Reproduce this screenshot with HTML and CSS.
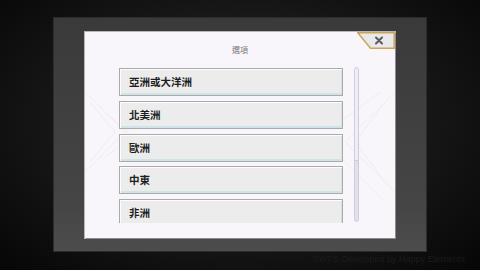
FILE: index.html
```html
<!DOCTYPE html>
<html lang="zh-Hant">
<head>
    <meta charset="UTF-8">
    <meta name="viewport" content="width=device-width, initial-scale=1.0">
    <title>選項</title>
    <link rel="stylesheet" href="styles.css">
</head>
<body>
    <div class="frame">
        <div class="panel">
            <svg class="deco" width="310" height="206" viewBox="0 0 310 206">
                <g stroke="#eeebf1" stroke-width="1" fill="none">
                    <path d="M0 60 L40 100 L0 140"/>
                    <path d="M5 70 L30 100 L5 130"/>
                    <path d="M20 80 L48 105 L20 125"/>
                    <path d="M310 60 L260 110 L310 160"/>
                    <path d="M300 70 L270 110 L300 150"/>
                    <path d="M250 120 L300 170"/>
                    <path d="M255 90 L295 60"/>
                </g>
            </svg>
            <div class="close-tab">
                <svg width="38" height="17" viewBox="0 0 38 17">
                    <polygon points="0.8,0.8 37.2,0.8 37.2,16.2 13.5,16.2" fill="#e9e8ec" stroke="#c9a653" stroke-width="1.5"/>
                    <path d="M19 5.5 L25 11.5 M25 5.5 L19 11.5" stroke="#5a5a5a" stroke-width="2" stroke-linecap="round"/>
                </svg>
            </div>
            <div class="title">選項</div>
            <div class="content">
                <div class="list">
                    <div class="item">亞洲或大洋洲</div>
                    <div class="item">北美洲</div>
                    <div class="item">歐洲</div>
                    <div class="item">中東</div>
                    <div class="item">非洲</div>
                </div>
                <div class="scrollbar">
                    <div class="thumb"></div>
                </div>
            </div>
        </div>
    </div>
    <div class="footer">SWFS Developed by Happy Elements</div>
</body>
</html>
```
FILE: styles.css
```css
body {
    margin: 0;
    padding-top: 18px;
    height: 270px;
    box-sizing: border-box;
    overflow: hidden;
    font-family: "Noto Sans CJK TC", "Noto Sans", sans-serif;
    background: radial-gradient(ellipse at 50% 45%, #262626 0%, #1a1a1a 45%, #060606 100%);
}

.frame {
    width: 372px;
    height: 233px;
    margin: 0 auto;
    padding: 14px 31px 13px;
    box-sizing: border-box;
    background: linear-gradient(#3a3a3a, #454545 80%, #4c4c4c);
    box-shadow: 0 0 0 1px #2c2c2c;
}

.panel {
    position: relative;
    width: 310px;
    height: 206px;
    background: #f8f6fb;
    box-shadow: 1px 1px 0 #8e8a94, 0 0 0 1px #b8b4bc;
    overflow: hidden;
}

.deco {
    position: absolute;
    left: 0;
    top: 0;
}

.close-tab {
    position: absolute;
    right: 0;
    top: 0;
    width: 38px;
    height: 17px;
}

.close-tab svg {
    display: block;
}

.title {
    position: relative;
    padding-top: 12px;
    height: 12px;
    line-height: 12px;
    font-size: 8px;
    color: #7a7a7a;
    text-align: center;
}

.content {
    position: relative;
    display: flex;
    gap: 11px;
    margin-top: 11px;
    padding-left: 34px;
}

.list {
    width: 224px;
    height: 155px;
    margin-top: 1px;
    overflow: hidden;
    display: flex;
    flex-direction: column;
    gap: 4.75px;
}

.item {
    flex: none;
    height: 28px;
    box-sizing: border-box;
    padding-left: 9px;
    line-height: 25px;
    font-size: 10.5px;
    font-weight: bold;
    color: #1e1e1e;
    background: #ececec;
    border: 1px solid #aaaaaa;
    box-shadow: inset 1px 1px 0 #fdfdfd, inset -1px -2px 0 #cfe4e6;
}

.scrollbar {
    width: 5px;
    height: 155px;
    box-sizing: border-box;
    border: 1px solid #cfcdda;
    border-radius: 3px;
    background: #e2e0ea;
}

.thumb {
    height: 92px;
    border-radius: 2px;
    background: #efedf8;
    border-bottom: 1px solid #c4c2d2;
}

.footer {
    padding: 3px 0 0 313px;
    font-family: "Liberation Sans", sans-serif;
    font-size: 9px;
    line-height: 10px;
    color: #1c1c1c;
    white-space: nowrap;
}
```
